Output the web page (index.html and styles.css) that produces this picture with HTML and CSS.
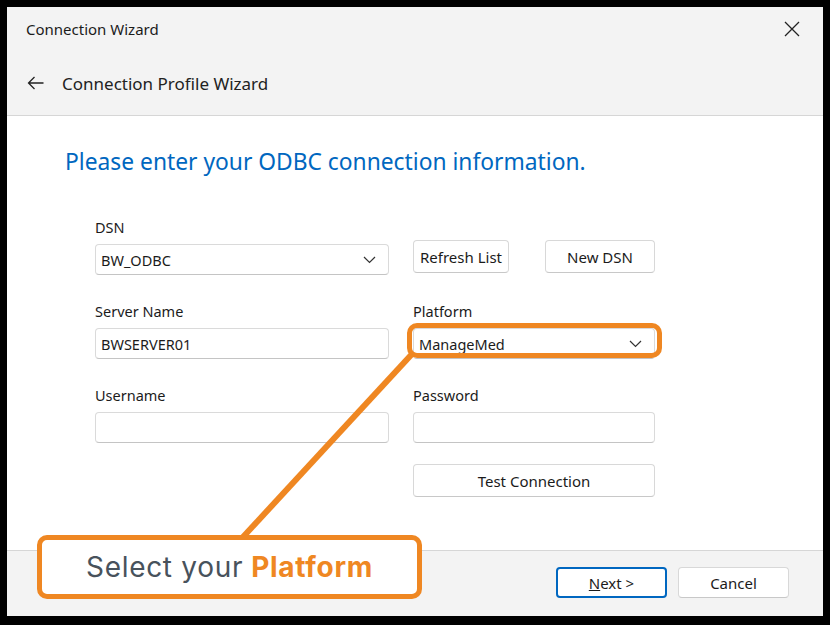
FILE: index.html
```html
<!DOCTYPE html>
<html lang="en">

<head>
    <meta charset="UTF-8">
    <title>Connection Wizard</title>
    <link rel="stylesheet" href="styles.css">
</head>

<body>
    <div class="window">
        <div class="titlebar">
            <span class="title">Connection Wizard</span>
            <svg class="close" width="16" height="16" viewBox="0 0 16 16">
                <path d="M1 1 L15 15 M15 1 L1 15" stroke="#222" stroke-width="1.3" fill="none" />
            </svg>
        </div>

        <div class="header">
            <svg class="back" width="17" height="14" viewBox="0 0 17 14">
                <path d="M16.5 7 H1.5 M7.5 1 L1.5 7 L7.5 13" stroke="#222" stroke-width="1.3" fill="none" />
            </svg>
            <span class="subtitle">Connection Profile Wizard</span>
        </div>

        <div class="content">
            <h1 class="heading">Please enter your ODBC connection information.</h1>

            <div class="form">
                <div class="field">
                    <label>DSN</label>
                    <div class="select">
                        <span>BW_ODBC</span>
                        <svg width="13" height="8" viewBox="0 0 13 8"><path d="M1 1 L6.5 6.5 L12 1" stroke="#333" stroke-width="1.2" fill="none" /></svg>
                    </div>
                </div>
                <div class="field buttons">
                    <button class="button refresh">Refresh List</button>
                    <button class="button newdsn">New DSN</button>
                </div>

                <div class="field">
                    <label>Server Name</label>
                    <div class="input">BWSERVER01</div>
                </div>
                <div class="field">
                    <label>Platform</label>
                    <div class="select platform">
                        <span>ManageMed</span>
                        <svg width="13" height="8" viewBox="0 0 13 8"><path d="M1 1 L6.5 6.5 L12 1" stroke="#333" stroke-width="1.2" fill="none" /></svg>
                        <div class="highlight"></div>
                    </div>
                </div>

                <div class="field">
                    <label>Username</label>
                    <div class="input"></div>
                </div>
                <div class="field">
                    <label>Password</label>
                    <div class="input"></div>
                </div>

                <div></div>
                <button class="button test">Test Connection</button>
            </div>
        </div>

        <div class="footer">
            <button class="button next"><u>N</u>ext &gt;</button>
            <button class="button cancel">Cancel</button>
        </div>

        <!-- annotation overlay -->
        <svg class="pointer" width="816" height="609" viewBox="0 0 816 609">
            <path d="M405 347 L236 530" stroke="#ef8722" stroke-width="6" fill="none" />
        </svg>
        <div class="callout">Select your <b>Platform</b></div>
    </div>
</body>

</html>
```

FILE: styles.css
```css
body {
    margin: 0;
    padding: 7px;
    background-color: #000;
    font-family: "Noto Sans", "Open Sans", sans-serif;
    color: #1b1b1b;
}

.window {
    position: relative;
    width: 816px;
    height: 609px;
    background-color: #f3f3f3;
    display: flex;
    flex-direction: column;
}

.titlebar {
    height: 44px;
    display: flex;
    align-items: center;
    justify-content: space-between;
    padding: 0 23px 0 19px;
}

.title {
    font-size: 15px;
}

.header {
    height: 64px;
    display: flex;
    align-items: center;
    padding-left: 20px;
    border-bottom: 1px solid #d6d6d6;
}

.back {
    margin-right: 18px;
}

.subtitle {
    font-size: 17px;
    color: #222;
}

.content {
    flex: 1;
    background-color: #fff;
    padding: 31px 0 0 58px;
}

.heading {
    margin: 0;
    font-size: 22.8px;
    line-height: 30px;
    font-weight: normal;
    color: #0067c0;
}

.form {
    display: grid;
    grid-template-columns: 294px 242px;
    column-gap: 24px;
    row-gap: 26px;
    margin: 40px 0 0 30px;
}

.field {
    position: relative;
    display: flex;
    flex-direction: column;
}

.field label {
    font-size: 14.5px;
    line-height: 20px;
    margin-bottom: 7px;
}

.input,
.select {
    position: relative;
    height: 31px;
    box-sizing: border-box;
    border: 1px solid #dadada;
    border-bottom-color: #c4c4c4;
    border-radius: 4px;
    background-color: #fff;
    padding: 0 5px;
    display: flex;
    align-items: center;
    justify-content: space-between;
    font-size: 14.5px;
}

.select svg {
    margin-right: 7px;
}

.highlight {
    position: absolute;
    left: -7px;
    top: -6px;
    width: 255px;
    height: 35px;
    box-sizing: border-box;
    border: 5px solid #ef8722;
    border-radius: 10px;
}

.buttons {
    flex-direction: row;
    align-items: flex-end;
    padding-bottom: 2px;
    gap: 36px;
}

.button {
    height: 33px;
    box-sizing: border-box;
    background-color: #fff;
    border: 1px solid #d8d8d8;
    border-bottom-color: #c8c8c8;
    border-radius: 4px;
    font-family: inherit;
    font-size: 15px;
    color: #1b1b1b;
    padding: 0;
}

.refresh {
    width: 96px;
}

.newdsn {
    width: 110px;
}

.test {
    margin-top: -5px;
}

.footer {
    height: 66px;
    box-sizing: border-box;
    border-top: 1px solid #d6d6d6;
    display: flex;
    justify-content: flex-end;
    align-items: flex-start;
    padding: 16px 34px 0 0;
    gap: 11px;
}

.footer .button {
    width: 111px;
    height: 31px;
}

.next {
    border: 2px solid #0067c0;
}

.pointer {
    position: absolute;
    left: 0;
    top: 0;
    pointer-events: none;
}

.callout {
    position: absolute;
    left: 30px;
    top: 528px;
    width: 385px;
    height: 64px;
    box-sizing: border-box;
    border: 5px solid #ef8722;
    border-radius: 10px;
    background-color: #fff;
    display: flex;
    align-items: center;
    justify-content: center;
    font-family: "Inter", sans-serif;
    font-size: 28px;
    color: #48525c;
    letter-spacing: 0.7px;
}

.callout b {
    color: #ef8722;
    margin-left: 8px;
}
```
